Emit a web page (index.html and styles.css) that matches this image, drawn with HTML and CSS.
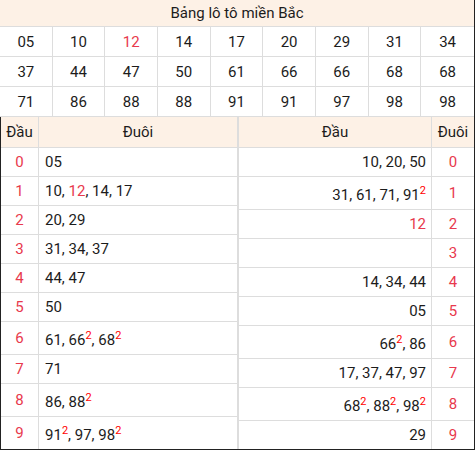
FILE: index.html
```html
<!DOCTYPE html>
<html lang="vi">
<head>
  <meta charset="UTF-8">
  <meta name="viewport" content="width=device-width, initial-scale=1.0">
  <title>Bảng lô tô miền Bắc</title>
  <link rel="stylesheet" href="styles.css">
</head>
<body>
  <div class="board">
    <table class="loto">
      <tr><th colspan="9">Bảng lô tô miền Bắc</th></tr>
      <tr><td>05</td><td>10</td><td class="hot">12</td><td>14</td><td>17</td><td>20</td><td>29</td><td>31</td><td>34</td></tr>
      <tr><td>37</td><td>44</td><td>47</td><td>50</td><td>61</td><td>66</td><td>66</td><td>68</td><td>68</td></tr>
      <tr><td>71</td><td>86</td><td>88</td><td>88</td><td>91</td><td>91</td><td>97</td><td>98</td><td>98</td></tr>
    </table>

    <div class="split">
      <table class="dd dd-left">
        <tr><th class="key">Đầu</th><th>Đuôi</th></tr>
        <tr><td class="key">0</td><td class="nums">05</td></tr>
        <tr><td class="key">1</td><td class="nums">10, <span class="hot">12</span>, 14, 17</td></tr>
        <tr><td class="key">2</td><td class="nums">20, 29</td></tr>
        <tr><td class="key">3</td><td class="nums">31, 34, 37</td></tr>
        <tr><td class="key">4</td><td class="nums">44, 47</td></tr>
        <tr><td class="key">5</td><td class="nums">50</td></tr>
        <tr><td class="key">6</td><td class="nums">61, 66<sup>2</sup>, 68<sup>2</sup></td></tr>
        <tr><td class="key">7</td><td class="nums">71</td></tr>
        <tr><td class="key">8</td><td class="nums">86, 88<sup>2</sup></td></tr>
        <tr><td class="key">9</td><td class="nums">91<sup>2</sup>, 97, 98<sup>2</sup></td></tr>
      </table>

      <table class="dd dd-right">
        <tr><th>Đầu</th><th class="key">Đuôi</th></tr>
        <tr><td class="nums">10, 20, 50</td><td class="key">0</td></tr>
        <tr><td class="nums">31, 61, 71, 91<sup>2</sup></td><td class="key">1</td></tr>
        <tr><td class="nums"><span class="hot">12</span></td><td class="key">2</td></tr>
        <tr><td class="nums"></td><td class="key">3</td></tr>
        <tr><td class="nums">14, 34, 44</td><td class="key">4</td></tr>
        <tr><td class="nums">05</td><td class="key">5</td></tr>
        <tr><td class="nums">66<sup>2</sup>, 86</td><td class="key">6</td></tr>
        <tr><td class="nums">17, 37, 47, 97</td><td class="key">7</td></tr>
        <tr><td class="nums">68<sup>2</sup>, 88<sup>2</sup>, 98<sup>2</sup></td><td class="key">8</td></tr>
        <tr><td class="nums">29</td><td class="key">9</td></tr>
      </table>
    </div>
  </div>
</body>
</html>
```

FILE: styles.css
```css
body {
  margin: 0;
  font-family: Roboto, "Liberation Sans", sans-serif;
  font-size: 15px;
  line-height: 18px;
  color: #1c1c1c;
  background: #fff;
}
.board {
  width: 475px;
  box-sizing: border-box;
  border-right: 1px solid #222;
}
table {
  border-collapse: separate;
  border-spacing: 0;
  table-layout: fixed;
}
th {
  font-weight: normal;
  background: #fdf1e6; /* light peach header */
}
td, th {
  box-sizing: border-box;
}
.hot {
  color: #e8394d;
}
sup {
  font-size: 11px;
  color: #f00;
  vertical-align: super;
}

/* top grid */
.loto {
  width: 474px;
}
.loto th {
  padding: 4px;
  border-bottom: 1px solid #ddd;
}
.loto td {
  text-align: center;
  padding: 6px 0 5px;
  border-right: 1px solid #ddd;
  border-bottom: 1px solid #ddd;
}
.loto td:last-child {
  border-right: 0;
}

/* head / tail tables */
.split {
  display: flex;
  align-items: flex-start;
  width: 475px;
  box-sizing: border-box;
  border-left: 1px solid #222;
  border-bottom: 1px solid #222;
}
.dd th {
  padding: 6px 0;
  border-right: 1px solid #ddd;
  border-bottom: 1px solid #ddd;
}
.dd td {
  padding: 5px 0;
  border-right: 1px solid #ddd;
  border-bottom: 1px solid #ddd;
}
.dd tr:last-child td {
  border-bottom: 0;
}
.dd .key {
  text-align: center;
}
.dd td.key {
  color: #e8394d;
}
.dd-left {
  width: 237px;
}
.dd-left .key {
  width: 38px;
}
.dd-left .nums {
  padding-left: 6px;
}
.dd-right {
  width: 236px;
}
.dd-right tr > :first-child {
  border-left: 1px solid #ddd;
}
.dd-right tr > :last-child {
  border-right: 0;
}
.dd-right .key {
  width: 42px;
}
.dd-right .nums {
  text-align: right;
  padding-right: 5px;
}
```
